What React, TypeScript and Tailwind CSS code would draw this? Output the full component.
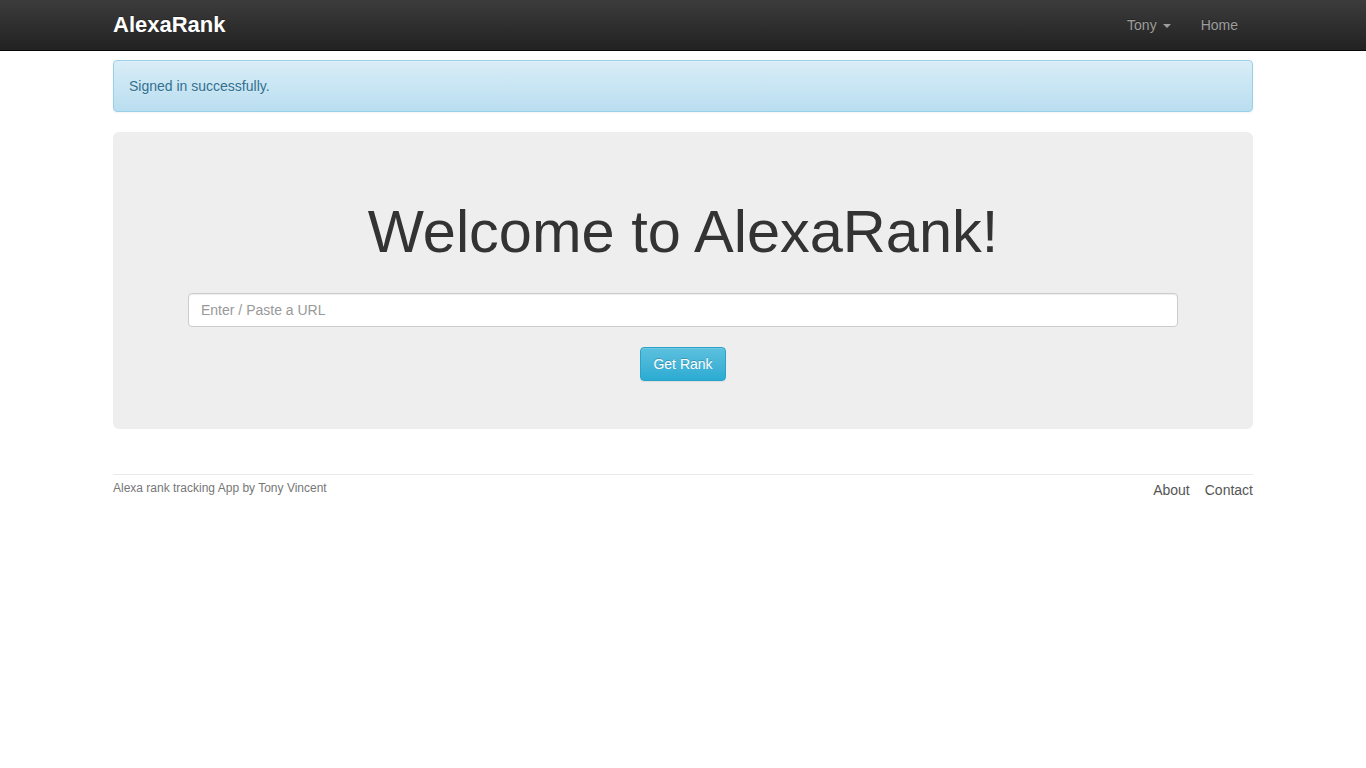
export default function App() {
  return (
    <div className="min-h-screen bg-white font-['Liberation_Sans',Arial,sans-serif] text-[14px] leading-[20px] text-[#333]">
      <nav className="h-[51px] border-b border-[#080808] bg-gradient-to-b from-[#3c3c3c] to-[#222]">
        <div className="mx-auto flex h-[50px] w-[1140px] items-center justify-between">
          <a href="#" className="text-[22px] font-bold leading-[50px] text-white [text-shadow:0_-1px_0_rgba(0,0,0,0.25)]">
            AlexaRank
          </a>
          <ul className="flex h-full items-center text-[#9d9d9d] [text-shadow:0_-1px_0_rgba(0,0,0,0.25)]">
            <li className="flex items-center px-[15px]">
              Tony
              <span className="ml-[6px] mt-[1px] inline-block h-0 w-0 border-x-[4px] border-t-[4px] border-x-transparent border-t-[#9d9d9d]" />
            </li>
            <li className="px-[15px]">Home</li>
          </ul>
        </div>
      </nav>

      <div className="mx-auto w-[1140px]">
        <div className="mt-[9px] rounded-[4px] border border-[#9acfea] bg-gradient-to-b from-[#d9edf7] to-[#b9def0] p-[15px] text-[#31708f] shadow-[inset_0_1px_0_rgba(255,255,255,0.25),0_1px_2px_rgba(0,0,0,0.05)] [text-shadow:0_1px_0_rgba(255,255,255,0.2)]">
          Signed in successfully.
        </div>

        <div className="mt-[20px] rounded-[6px] bg-[#eee] px-[60px] py-[48px]">
          <h1 className="mt-[17px] mb-[27px] text-center text-[59.5px] leading-[69px] font-normal text-[#333]">
            Welcome to AlexaRank!
          </h1>
          <div className="px-[15px]">
            <input
              type="text"
              placeholder="Enter / Paste a URL"
              className="block h-[34px] w-full rounded-[4px] border border-[#ccc] bg-white px-[12px] py-[6px] text-[14px] text-[#555] shadow-[inset_0_1px_1px_rgba(0,0,0,0.075)] outline-none placeholder:text-[#999]"
            />
          </div>
          <div className="mt-[20px] flex justify-center">
            <button className="h-[34px] rounded-[4px] border border-[#28a4c9] bg-gradient-to-b from-[#5bc0de] to-[#2aabd2] px-[12px] text-[14px] text-white shadow-[inset_0_1px_0_rgba(255,255,255,0.15),0_1px_1px_rgba(0,0,0,0.075)] [text-shadow:0_-1px_0_rgba(0,0,0,0.2)]">
              Get Rank
            </button>
          </div>
        </div>

        <footer className="mt-[45px] flex items-start justify-between border-t border-[#eaeaea] pt-[5px] text-[#777]">
          <small className="text-[12px] leading-[16px]">Alexa rank tracking App by Tony Vincent</small>
          <ul className="flex gap-[15px] text-[#555]">
            <li>
              <a href="#">About</a>
            </li>
            <li>
              <a href="#">Contact</a>
            </li>
          </ul>
        </footer>
      </div>
    </div>
  );
}
